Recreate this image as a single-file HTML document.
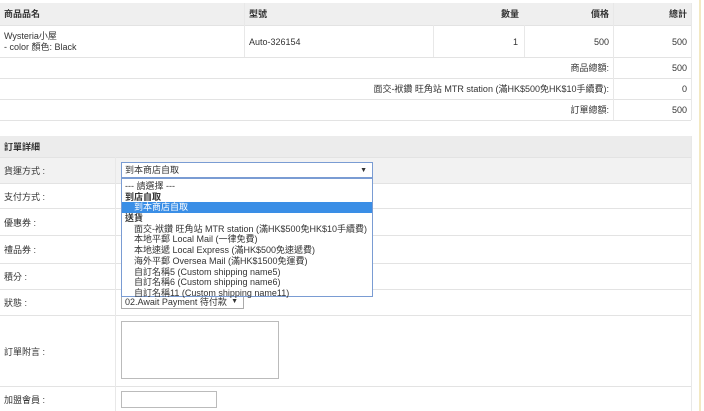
<!DOCTYPE html>
<html><head><meta charset="utf-8"><style>
*{margin:0;padding:0;box-sizing:border-box}
body{width:704px;height:411px;background:#fff;font-family:"Liberation Sans","Noto Sans CJK TC",sans-serif;font-size:9px;line-height:11px;color:#333;position:relative;overflow:hidden}
.a{position:absolute;white-space:nowrap}
.bg{position:absolute;background:#efefef}
.hl{position:absolute;height:1px;background:#e3e3e3}
.vl{position:absolute;width:1px;background:#e8e8e8}
.b{font-weight:bold}
.r{text-align:right}
.dd div{height:10.7px;line-height:11px;white-space:nowrap}
.ar{position:absolute;right:5px;top:3px;font-size:7px;line-height:10px}
</style></head><body>
<div class="a" style="left:699px;top:0;width:2px;height:411px;background:#f3e9c3"></div>
<!-- top table -->
<div class="bg" style="left:0;top:3px;width:691px;height:22px"></div>
<div class="hl" style="left:0;top:25px;width:691px"></div>
<div class="hl" style="left:0;top:57px;width:691px"></div>
<div class="hl" style="left:0;top:78px;width:691px"></div>
<div class="hl" style="left:0;top:99px;width:691px"></div>
<div class="hl" style="left:0;top:120px;width:691px"></div>
<div class="vl" style="left:244px;top:3px;height:54px"></div>
<div class="vl" style="left:433px;top:25px;height:32px"></div>
<div class="vl" style="left:524px;top:25px;height:32px"></div>
<div class="vl" style="left:613px;top:3px;height:117px"></div>
<div class="vl" style="left:691px;top:3px;height:117px"></div>
<div class="a b" style="left:4px;top:9px">商品品名</div>
<div class="a b" style="left:249px;top:9px">型號</div>
<div class="a b r" style="left:440px;top:9px;width:79px">數量</div>
<div class="a b r" style="left:530px;top:9px;width:79px">價格</div>
<div class="a b r" style="left:610px;top:9px;width:77px">總計</div>
<div class="a" style="left:4px;top:31px;line-height:11px">Wysteria小屋<br>- color 顏色: Black</div>
<div class="a" style="left:249px;top:37px">Auto-326154</div>
<div class="a r" style="left:440px;top:37px;width:78px">1</div>
<div class="a r" style="left:530px;top:37px;width:79px">500</div>
<div class="a r" style="left:610px;top:37px;width:77px">500</div>
<div class="a r" style="left:200px;top:63px;width:409px">商品總額:</div>
<div class="a r" style="left:610px;top:63px;width:77px">500</div>
<div class="a r" style="left:200px;top:84px;width:409px">面交-袱鑽 旺角站 MTR station (滿HK$500免HK$10手續費):</div>
<div class="a r" style="left:610px;top:84px;width:77px">0</div>
<div class="a r" style="left:200px;top:105px;width:409px">訂單總額:</div>
<div class="a r" style="left:610px;top:105px;width:77px">500</div>
<!-- bottom table -->
<div class="bg" style="left:0;top:136px;width:691px;height:21px;background:#ececec"></div>
<div class="bg" style="left:0;top:157px;width:691px;height:26px;background:#f2f2f2"></div>
<div class="hl" style="left:0;top:157px;width:691px"></div>
<div class="hl" style="left:0;top:183px;width:691px"></div>
<div class="hl" style="left:0;top:208px;width:691px"></div>
<div class="hl" style="left:0;top:235px;width:691px"></div>
<div class="hl" style="left:0;top:263px;width:691px"></div>
<div class="hl" style="left:0;top:289px;width:691px"></div>
<div class="hl" style="left:0;top:315px;width:691px"></div>
<div class="hl" style="left:0;top:386px;width:691px"></div>
<div class="vl" style="left:115px;top:157px;height:254px"></div>
<div class="vl" style="left:691px;top:136px;height:275px"></div>
<div class="a b" style="left:4px;top:142px">訂單詳細</div>
<div class="a" style="left:4px;top:166px">貨運方式 :</div>
<div class="a" style="left:4px;top:192px">支付方式 :</div>
<div class="a" style="left:4px;top:218px">優惠券 :</div>
<div class="a" style="left:4px;top:245px">禮品券 :</div>
<div class="a" style="left:4px;top:272px">積分 :</div>
<div class="a" style="left:4px;top:298px">狀態 :</div>
<div class="a" style="left:4px;top:347px">訂單附言 :</div>
<div class="a" style="left:4px;top:395px">加盟會員 :</div>
<!-- status select -->
<div class="a" style="left:121px;top:294px;width:123px;height:15px;border:1px solid #aaa;background:#fff;padding:0 3px;line-height:14px">02.Await Payment 待付款<span class="ar" style="top:2px">▼</span></div>
<div class="a" style="left:121px;top:321px;width:158px;height:58px;border:1px solid #bbb"></div>
<div class="a" style="left:121px;top:391px;width:96px;height:17px;border:1px solid #bbb"></div>
<!-- shipping select -->
<div class="a" style="left:121px;top:162px;width:252px;height:16px;border:1px solid #7a9cd3;background:#fff;padding:0 3px;line-height:15px">到本商店自取<span class="ar">▼</span></div>
<div class="a dd" style="left:121px;top:178px;width:252px;height:119px;border:1px solid #7a9cd3;background:#fff;padding-top:2px">
<div style="padding-left:3px">--- 請選擇 ---</div>
<div class="b" style="padding-left:3px">到店自取</div>
<div style="padding-left:12px;background:#3a8ee6;color:#fff">到本商店自取</div>
<div class="b" style="padding-left:3px">送貨</div>
<div style="padding-left:12px">面交-袱鑽 旺角站 MTR station (滿HK$500免HK$10手續費)</div>
<div style="padding-left:12px">本地平郵 Local Mail (一律免費)</div>
<div style="padding-left:12px">本地速遞 Local Express (滿HK$500免速遞費)</div>
<div style="padding-left:12px">海外平郵 Oversea Mail (滿HK$1500免運費)</div>
<div style="padding-left:12px">自訂名稱5 (Custom shipping name5)</div>
<div style="padding-left:12px">自訂名稱6 (Custom shipping name6)</div>
<div style="padding-left:12px">自訂名稱11 (Custom shipping name11)</div>
</div>
</body></html>
